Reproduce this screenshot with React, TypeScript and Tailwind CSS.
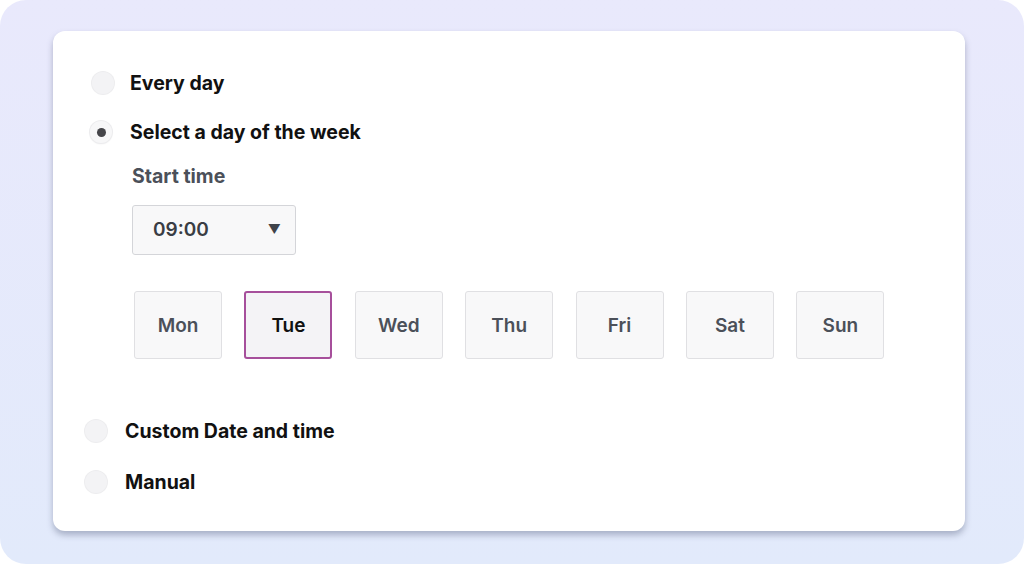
import React from 'react';

const days = ['Mon', 'Tue', 'Wed', 'Thu', 'Fri', 'Sat', 'Sun'];

const Radio: React.FC<{ checked?: boolean }> = ({ checked }) => (
  <span
    className={
      'flex h-[22px] w-[22px] shrink-0 items-center justify-center rounded-full ' +
      (checked
        ? 'bg-[#f7f7f8] shadow-[0_0_0_1px_#ececee,0_1px_2px_rgba(0,0,0,0.08)]'
        : 'bg-[#f3f3f5] shadow-[0_0_0_1px_#ededef]')
    }
  >
    {checked && <span className="h-[9px] w-[9px] rounded-full bg-[#454549]" />}
  </span>
);

const App: React.FC = () => {
  return (
    <div
      className="h-[564px] w-[1024px] bg-white"
      style={{ fontFamily: 'Inter, "Noto Sans", sans-serif' }}
    >
      <div className="h-full w-full overflow-hidden rounded-[26px] bg-gradient-to-b from-[#e9e9fc] to-[#e2eafb] pl-[53px] pt-[31px]">
        <div className="h-[500px] w-[912px] rounded-[12px] bg-white pt-[38px] shadow-[0_4px_6px_rgba(80,90,120,0.4)]">
          <div className="flex h-[28px] items-center gap-4 pl-[39px]">
            <Radio />
            <span className="text-[19.5px] font-bold leading-[28px] text-[#111]">Every day</span>
          </div>
          <div className="mt-[21px] flex h-[28px] items-center gap-[18px] pl-[37px]">
            <Radio checked />
            <span className="text-[19.5px] font-bold leading-[28px] text-[#111]">
              Select a day of the week
            </span>
          </div>

          <div className="pl-[79px]">
            <div className="mt-[18px] text-[19.5px] font-bold leading-[24px] text-[#4b5059]">
              Start time
            </div>
            <div className="mt-[17px] flex h-[50px] w-[164px] items-center justify-between rounded-[3px] border border-[#d4d5d9] bg-[#f8f8f9] pl-[20px] pr-[14px]">
              <span className="text-[19px] font-semibold text-[#3a3d44]">09:00</span>
              <span className="text-[13px] text-[#3f434a]">▼</span>
            </div>

            <div className="mt-[36px] flex gap-[22.4px] pl-[2px]">
              {days.map((d) =>
                d === 'Tue' ? (
                  <div
                    key={d}
                    className="flex h-[68px] w-[88px] items-center justify-center rounded-[3px] border-2 border-[#a64f9b] bg-[#f4f3f6] pt-[2px] text-[19px] font-semibold text-[#111]"
                  >
                    {d}
                  </div>
                ) : (
                  <div
                    key={d}
                    className="flex h-[68px] w-[88px] items-center justify-center rounded-[3px] border border-[#e0e0e3] bg-[#f8f8f9] pt-[2px] text-[19px] font-semibold text-[#4b5059]"
                  >
                    {d}
                  </div>
                )
              )}
            </div>
          </div>

          <div className="mt-[58px] flex h-[28px] items-center gap-[18px] pl-[32px]">
            <Radio />
            <span className="text-[19.5px] font-bold leading-[28px] text-[#111]">
              Custom Date and time
            </span>
          </div>
          <div className="mt-[23px] flex h-[28px] items-center gap-[18px] pl-[32px]">
            <Radio />
            <span className="text-[19.5px] font-bold leading-[28px] text-[#111]">Manual</span>
          </div>
        </div>
      </div>
    </div>
  );
};

export default App;
